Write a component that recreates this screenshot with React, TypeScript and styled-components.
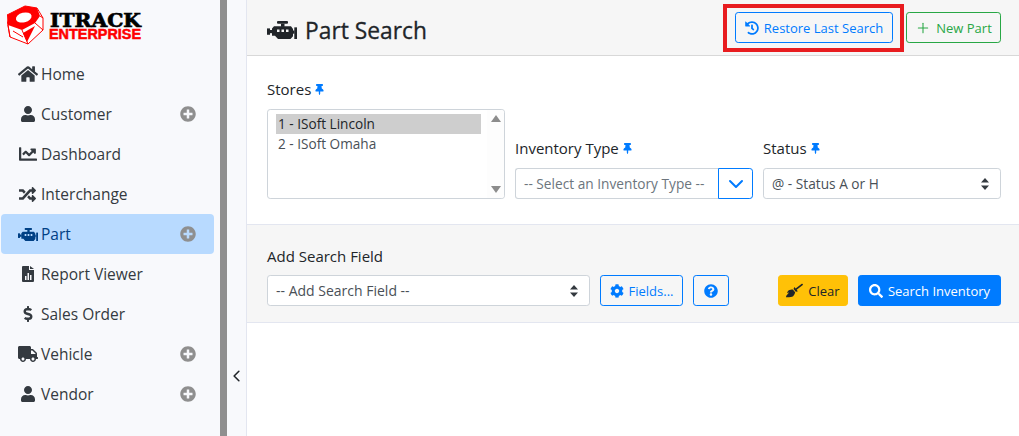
import React from 'react';
import styled, { createGlobalStyle } from 'styled-components';
import {
  FaHome,
  FaUser,
  FaChartLine,
  FaRandom,
  FaDollarSign,
  FaTruck,
  FaPlusCircle,
  FaThumbtack,
  FaHistory,
  FaCog,
  FaQuestionCircle,
  FaBroom,
  FaSearch,
} from 'react-icons/fa';
import { ChevronDown, ChevronLeft, Plus } from 'lucide-react';

const GlobalStyle = createGlobalStyle`
  html, body { margin: 0; padding: 0; height: 100%; overflow: hidden; }
  #root { height: 100%; }
  * { box-sizing: border-box; }
  body {
    font-family: "Open Sans", "Noto Sans", "Liberation Sans", sans-serif;
    font-size: 14px;
    color: #212529;
    background: #fff;
  }
`;

const Page = styled.div`
  display: flex;
  width: 1019px;
  height: 436px;
  overflow: hidden;
`;

const Sidebar = styled.nav`
  width: 227px;
  flex: none;
  background: #f8f9fc;
  border-right: 7px solid #8f8f8f;
  padding: 0 6px 0 1px;
`;

const LogoWrap = styled.div`
  height: 54px;
  padding: 4px 0 0 6px;
`;

const Row = styled.div<{ $active?: boolean }>`
  display: flex;
  align-items: center;
  height: 40px;
  border-radius: 4px;
  padding-right: 18px;
  font-size: 15.5px;
  color: ${(p) => (p.$active ? '#004085' : '#343a40')};
  background: ${(p) => (p.$active ? '#b8daff' : 'transparent')};
`;

const RowIcon = styled.span`
  width: 40px;
  padding-left: 13px;
  flex: none;
  display: flex;
  justify-content: center;
  align-items: center;
`;

const RowLabel = styled.span`
  flex: 1;
`;

const Expand = styled(FaPlusCircle)`
  color: #8f8f8f;
  font-size: 16px;
`;

const Collapser = styled.div`
  width: 20px;
  flex: none;
  background: #f8f9fc;
  border-right: 1px solid #e3e6f0;
  display: flex;
  align-items: center;
  justify-content: center;
  padding: 316px 0 0 0;
  color: #212529;
`;

const Main = styled.main`
  flex: 1;
  display: flex;
  flex-direction: column;
  position: relative;
`;

const Header = styled.header`
  height: 56px;
  flex: none;
  background: #f6f6f6;
  border-bottom: 1px solid #d8d8d8;
  display: flex;
  align-items: flex-start;
  padding: 12px 18px 0 20px;
`;

const Title = styled.h1`
  margin: 0;
  flex: 1;
  display: flex;
  align-items: center;
  gap: 8px;
  height: 36px;
  font-size: 22.8px;
  font-weight: 500;
  -webkit-text-stroke: 0.3px #212529;
  color: #212529;
`;

const HeaderButtons = styled.div`
  display: flex;
  gap: 13px;
`;

const Button = styled.button<{ $color: string; $fill?: boolean; $text?: string; $width: number }>`
  height: 31px;
  width: ${(p) => p.$width}px;
  flex: none;
  display: inline-flex;
  align-items: center;
  justify-content: center;
  gap: 5px;
  padding: 0;
  font: inherit;
  font-size: 13px;
  border-radius: 3.2px;
  border: 1px solid ${(p) => p.$color};
  color: ${(p) => p.$text || p.$color};
  background: ${(p) => (p.$fill ? p.$color : 'transparent')};
`;

const Highlight = styled.div`
  position: absolute;
  left: 476px;
  top: 4px;
  width: 181px;
  height: 48px;
  border: 4px solid #e81c1f;
  pointer-events: none;
`;

const FormRow = styled.section`
  height: 168px;
  flex: none;
  display: flex;
  align-items: flex-end;
  gap: 10px;
  padding: 0 18px 25px 20px;
`;

const Field = styled.div<{ $width: number }>`
  width: ${(p) => p.$width}px;
  flex: none;
`;

const Label = styled.label`
  display: flex;
  align-items: center;
  gap: 3px;
  height: 20px;
  margin-bottom: 10px;
  font-size: 15px;
  color: #212529;
`;

const SearchLabel = styled(Label)`
  margin-bottom: 9px;
`;

const Pin = styled(FaThumbtack)`
  color: #007bff;
  font-size: 11px;
`;

const ListBox = styled.div`
  height: 90px;
  position: relative;
  border: 1px solid #ced4da;
  border-radius: 3.2px;
  padding: 4px 23px 0 8px;
  font-size: 13.6px;
  color: #495057;
`;

const ListOption = styled.div<{ $selected?: boolean }>`
  height: 20px;
  line-height: 20px;
  padding-left: 2px;
  color: ${(p) => (p.$selected ? '#212529' : '#495057')};
  background: ${(p) => (p.$selected ? '#cecece' : 'transparent')};
`;

const ScrollTrack = styled.div`
  position: absolute;
  top: 0;
  right: 0;
  bottom: 0;
  width: 17px;
  background: #fdfdfd;
  border-radius: 0 3px 3px 0;
  display: flex;
  flex-direction: column;
  justify-content: space-between;
  align-items: center;
  padding: 5px 0 5px;
`;

const Arrow = styled.span<{ $down?: boolean }>`
  width: 0;
  height: 0;
  border-left: 5px solid transparent;
  border-right: 5px solid transparent;
  border-${(p) => (p.$down ? 'top' : 'bottom')}: 7px solid #8c8c8c;
`;

const Select = styled.div<{ $width?: number; $size?: number }>`
  height: 31px;
  width: ${(p) => (p.$width ? `${p.$width}px` : '100%')};
  flex: none;
  display: flex;
  align-items: center;
  justify-content: space-between;
  padding: 0 11px 0 8px;
  border: 1px solid #ced4da;
  border-radius: 3.2px;
  background: #fff;
  font-size: ${(p) => p.$size || 13.7}px;
  color: #495057;
`;

const Carets = styled.svg`
  width: 8px;
  height: 12px;
  flex: none;
`;

const Combo = styled.div`
  display: flex;
  height: 31px;
`;

const ComboInput = styled.div`
  flex: 1;
  display: flex;
  align-items: center;
  padding-left: 8px;
  border: 1px solid #ced4da;
  border-right: 0;
  border-radius: 3.2px 0 0 3.2px;
  font-size: 13.7px;
  color: #6c757d;
`;

const ComboButton = styled.div`
  width: 35px;
  display: flex;
  align-items: center;
  justify-content: center;
  border: 1px solid #007bff;
  border-radius: 0 3.2px 3.2px 0;
  color: #007bff;
`;

const SearchPanel = styled.section`
  height: 99px;
  flex: none;
  background: #f6f6f6;
  border-top: 1px solid #e3e6f0;
  border-bottom: 1px solid #e3e6f0;
  padding: 21px 18px 0 20px;
`;

const SearchRow = styled.div`
  display: flex;
  align-items: center;
  gap: 10px;
`;

const Spacer = styled.div`
  flex: 1;
  max-width: 39px;
`;

const EngineIcon = ({ size = 20, height = 13 }: { size?: number; height?: number }) => (
  <svg width={size} height={height} viewBox="0 0 30 17" preserveAspectRatio="none" fill="currentColor">
    <rect x="0" y="7" width="3" height="6" />
    <rect x="3" y="8.5" width="2.5" height="3" />
    <rect x="10" y="0" width="11" height="2.6" rx="1" />
    <rect x="14" y="2.5" width="3.5" height="3" />
    <path
      fillRule="evenodd"
      d="M7 5h17l2 2.5v7L23.5 17H11l-3-3H5V7zM10 8v2.5h2.5V8zM14.5 8v2.5H17V8zM19 8v2.5h2.5V8z"
    />
    <rect x="26" y="9" width="1.5" height="3" />
    <rect x="27.3" y="6" width="2.7" height="11" />
  </svg>
);

const ReportIcon = () => (
  <svg width="12" height="16" viewBox="0 0 12 16" fill="currentColor">
    <path
      fillRule="evenodd"
      d="M0 1a1 1 0 0 1 1-1h6v4h5v11a1 1 0 0 1-1 1H1a1 1 0 0 1-1-1zM3 10v4h1.5v-4zM5.5 7v7H7V7zM8 9v5h1.5V9z"
    />
    <path d="M8 0l4 3H8z" />
  </svg>
);

const Logo = () => (
  <svg width="142" height="42" viewBox="0 0 142 42">
    <path d="M0 11 L18 2 L30 4 L36 14 L36 26 L21 40 L3 33 L0 16 Z" fill="#fff" stroke="#f00" />
    <path
      fillRule="evenodd"
      d="M0 11 L18 2 L30 4 L33 12 L28 19 L15 26 L1 21 Z M9 15.5 a8 4.8 -15 1 0 15.5 -4 a8 4.8 -15 1 0 -15.5 4 Z"
      fill="#f00"
    />
    <path d="M16 29 L28 22 L20 38 Z" fill="#f00" />
    <path
      d="M1 21 L3 33 M15 26 L21 40 M28 19 L36 26 M33 12 L36 14 M6 27 L16 33"
      fill="none"
      stroke="#f00"
      strokeWidth="1"
    />
    <text
      x="43"
      y="22.5"
      fontFamily="'DejaVu Serif', serif"
      fontWeight="900"
      fontSize="19"
      textLength="91"
      lengthAdjust="spacingAndGlyphs"
      stroke="#000"
      strokeWidth="0.7"
      fill="#000"
    >
      ITRACK
    </text>
    <text
      x="42"
      y="35"
      fontFamily="'Liberation Sans', sans-serif"
      fontWeight="700"
      fontSize="14"
      textLength="92"
      lengthAdjust="spacingAndGlyphs"
      stroke="#f00"
      strokeWidth="0.5"
      fill="#f00"
    >
      ENTERPRISE
    </text>
  </svg>
);

const SelectCarets = () => (
  <Carets viewBox="0 0 8 12" fill="#343a40">
    <path d="M4 0l4 4.6H0zM4 12L0 7.4h8z" />
  </Carets>
);

const navItems = [
  { label: 'Home', icon: <FaHome size={20} /> },
  { label: 'Customer', icon: <FaUser size={16} />, expand: true },
  { label: 'Dashboard', icon: <FaChartLine size={18} /> },
  { label: 'Interchange', icon: <FaRandom size={17} /> },
  { label: 'Part', icon: <EngineIcon />, expand: true, active: true },
  { label: 'Report Viewer', icon: <ReportIcon /> },
  { label: 'Sales Order', icon: <FaDollarSign size={16} /> },
  { label: 'Vehicle', icon: <FaTruck size={20} />, expand: true },
  { label: 'Vendor', icon: <FaUser size={16} />, expand: true },
];

export default function App() {
  return (
    <Page>
      <GlobalStyle />
      <Sidebar>
        <LogoWrap>
          <Logo />
        </LogoWrap>
        {navItems.map((item) => (
          <Row key={item.label} $active={item.active}>
            <RowIcon>{item.icon}</RowIcon>
            <RowLabel>{item.label}</RowLabel>
            {item.expand && <Expand />}
          </Row>
        ))}
      </Sidebar>
      <Collapser>
        <ChevronLeft size={28} strokeWidth={2} />
      </Collapser>
      <Main>
        <Header>
          <Title>
            <EngineIcon size={30} height={18} />
            Part Search
          </Title>
          <HeaderButtons>
            <Button $color="#007bff" $width={158}>
              <FaHistory size={14} />
              Restore Last Search
            </Button>
            <Button $color="#28a745" $width={95}>
              <Plus size={16} strokeWidth={1.6} />
              New Part
            </Button>
          </HeaderButtons>
        </Header>
        <Highlight />
        <FormRow>
          <Field $width={238}>
            <Label>
              Stores <Pin />
            </Label>
            <ListBox>
              <ListOption $selected>1 - ISoft Lincoln</ListOption>
              <ListOption>2 - ISoft Omaha</ListOption>
              <ScrollTrack>
                <Arrow />
                <Arrow $down />
              </ScrollTrack>
            </ListBox>
          </Field>
          <Field $width={238}>
            <Label>
              Inventory Type <Pin />
            </Label>
            <Combo>
              <ComboInput>-- Select an Inventory Type --</ComboInput>
              <ComboButton>
                <ChevronDown size={24} strokeWidth={2} />
              </ComboButton>
            </Combo>
          </Field>
          <Field $width={238}>
            <Label>
              Status <Pin />
            </Label>
            <Select>
              @ - Status A or H
              <SelectCarets />
            </Select>
          </Field>
        </FormRow>
        <SearchPanel>
          <SearchLabel>Add Search Field</SearchLabel>
          <SearchRow>
            <Select $width={323} $size={14}>
              -- Add Search Field --
              <SelectCarets />
            </Select>
            <Button $color="#007bff" $width={83}>
              <FaCog size={14} />
              Fields...
            </Button>
            <Button $color="#007bff" $width={36}>
              <FaQuestionCircle size={14} />
            </Button>
            <Spacer />
            <Button $color="#ffc107" $text="#212529" $fill $width={70}>
              <FaBroom size={17} />
              Clear
            </Button>
            <Button $color="#007bff" $text="#fff" $fill $width={143}>
              <FaSearch size={14} />
              Search Inventory
            </Button>
          </SearchRow>
        </SearchPanel>
      </Main>
    </Page>
  );
}
